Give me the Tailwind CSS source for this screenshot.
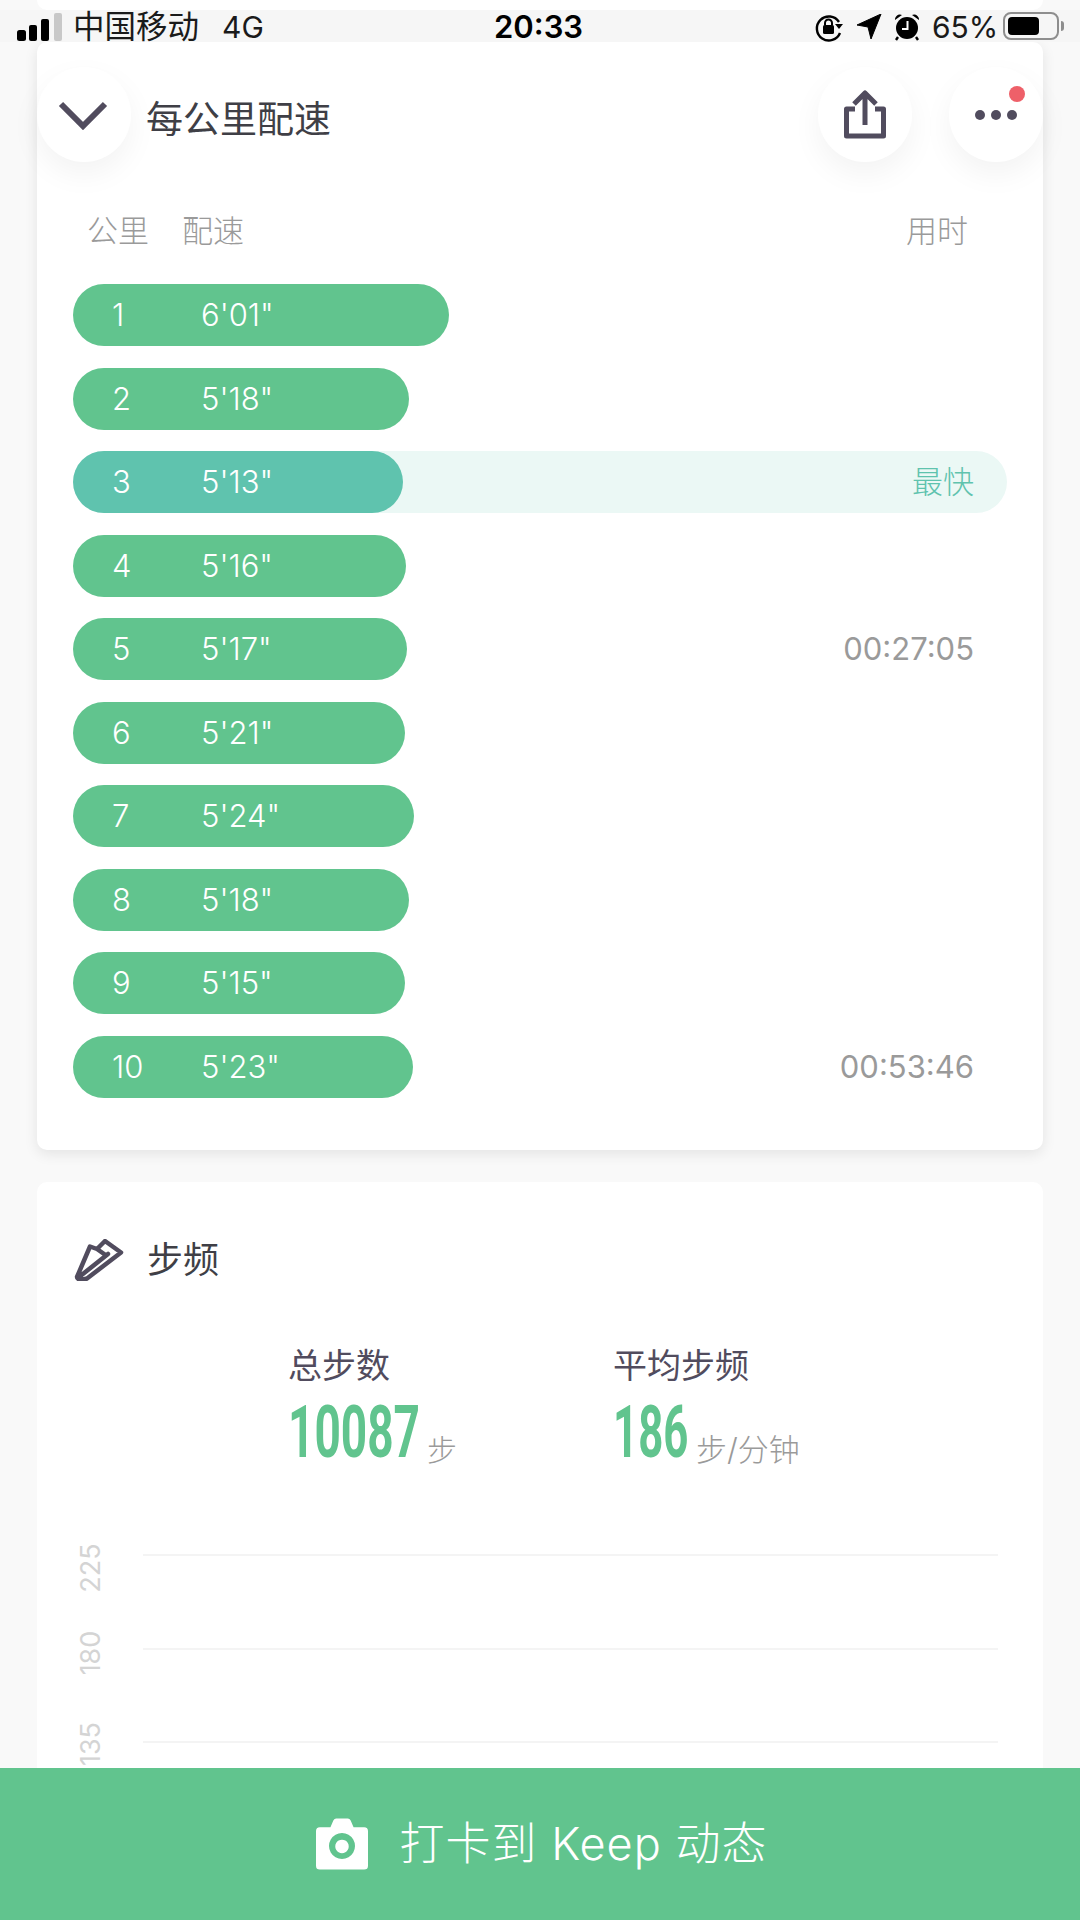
<!DOCTYPE html>
<html lang="zh-CN">
<head>
<meta charset="UTF-8">
<title>每公里配速</title>
<script src="https://cdn.jsdelivr.net/npm/@tailwindcss/browser@4"></script>
</head>
<body class="bg-[#f9f9f9]">
<div class="relative w-[1080px] h-[1920px] overflow-hidden font-['Inter','Noto_Sans_CJK_SC',sans-serif]">

  <!-- Status bar -->
  <div class="absolute top-[10px] left-0 right-0 h-[32px] z-10 bg-[#f6f6f6]">
    <div class="relative h-full">
      <svg class="absolute left-[17px] top-[3px]" width="46" height="29" viewBox="0 0 46 29">
        <rect x="0" y="17" width="9" height="11" rx="2.5" fill="#000"/>
        <rect x="12" y="12" width="8" height="16" rx="2" fill="#000"/>
        <rect x="24" y="6" width="8" height="22" rx="2" fill="#000"/>
        <rect x="37" y="0" width="8" height="28" rx="2" fill="#c8c8c8"/>
      </svg>
      <span class="absolute left-[73px] top-[-2px] text-[31.5px] leading-[38px] text-[#1a1a1a] whitespace-nowrap">中国移动</span>
      <span class="absolute left-[222px] top-[-2px] text-[30px] leading-[38px] text-[#1a1a1a]">4G</span>
      <span class="absolute left-[494px] top-[-2px] text-[31px] leading-[38px] font-semibold text-black">20:33</span>
      <svg class="absolute left-[814px] top-[3px]" width="30" height="30" viewBox="0 0 30 30">
        <path d="M25 9A12 12 0 1 0 26 20" fill="none" stroke="#000" stroke-width="2.4"/>
        <path d="M21 11h8l-4 5z" fill="#000"/>
        <rect x="9" y="12" width="11" height="9" rx="1.5" fill="#000"/>
        <path d="M11 12V10a3.5 3.5 0 0 1 7 0v2" fill="none" stroke="#000" stroke-width="2"/>
      </svg>
      <svg class="absolute left-[857px] top-[4px]" width="25" height="26" viewBox="0 0 25 26">
        <path d="M24 0L14 25 11 13 0 11z" fill="#000" stroke="#000" stroke-linejoin="round"/>
      </svg>
      <svg class="absolute left-[894px] top-[3px]" width="26" height="28" viewBox="0 0 26 28">
        <circle cx="13" cy="15" r="11" fill="#000"/>
        <path d="M1 7a5 5 0 0 1 7-5zM25 7a5 5 0 0 0-7-5z" fill="#000"/>
        <path d="M4 24l-2 3M22 24l2 3" stroke="#000" stroke-width="2.4"/>
        <path d="M13.500 8v8H8" fill="none" stroke="#fff" stroke-width="2"/>
      </svg>
      <span class="absolute left-[932px] top-[-2px] text-[30px] leading-[38px] text-[#1a1a1a]">65%</span>
      <div class="absolute left-[1003px] top-[2px] w-[56px] h-[28px] rounded-[8px] border-2 border-[#8e8e8e] p-[3px]">
        <div class="w-[31px] h-full rounded-[4px] bg-black"></div>
      </div>
      <div class="absolute left-[1061px] top-[11px] w-[3px] h-[10px] rounded-r-full bg-[#8e8e8e]"></div>
    </div>
  </div>

  <div class="mx-[37px] h-[10px] rounded-b-[10px] bg-white"></div>

  <!-- Pace card -->
  <section class="mt-[32px] h-[1108px] rounded-[10px] mx-[37px] bg-white shadow-[0_4px_14px_rgba(0,0,0,0.09)] pt-[25px]">
    <header class="flex items-center h-[95px]">
      <div class="flex items-center justify-center w-[94px] h-[95px] rounded-full bg-white shadow-[0_12px_30px_rgba(0,0,0,0.05)]">
        <svg class="mr-[3px]" width="50" height="30" viewBox="0 0 50 30"><path d="M3 4l22 22L47 4" fill="none" stroke="#514c5e" stroke-width="6"/></svg>
      </div>
      <h1 class="ml-[15px] pt-[10px] text-[37px] font-normal text-[#3f3f46]">每公里配速</h1>
      <div class="ml-auto flex items-center gap-[37px]">
        <div class="flex items-center justify-center w-[94px] h-[95px] rounded-full bg-white shadow-[0_12px_30px_rgba(0,0,0,0.05)]">
          <svg width="44" height="50" viewBox="0 0 44 50"><path d="M12 19H3.500v27h37V19H32M22 35V5M11 14L22 3l11 11" fill="none" stroke="#514c5e" stroke-width="5" stroke-linejoin="round"/></svg>
        </div>
        <div class="relative flex items-center justify-center gap-[6px] w-[94px] h-[95px] rounded-full bg-white shadow-[0_12px_30px_rgba(0,0,0,0.05)]">
          <i class="block w-[10px] h-[10px] rounded-full bg-[#514c5e]"></i>
          <i class="block w-[10px] h-[10px] rounded-full bg-[#514c5e]"></i>
          <i class="block w-[10px] h-[10px] rounded-full bg-[#514c5e]"></i>
          <i class="absolute top-[19px] right-[18px] block w-[16px] h-[16px] rounded-full bg-[#ee6069]"></i>
        </div>
      </div>
    </header>

    <div class="flex items-center h-[40px] mt-[49px] pl-[50px] pr-[75px] text-[31px] text-[#9a9a9a] font-light">
      <span>公里</span>
      <span class="ml-[33px]">配速</span>
      <span class="ml-auto">用时</span>
    </div>

    <div class="mt-[33px] mx-[36px] flex flex-col gap-[21.5px] text-[31px] leading-[64px] text-white font-light">
      <div class="flex items-center justify-between h-[62px] rounded-full">
        <div class="flex items-center h-full rounded-full bg-[#61c48e]" style="width:376px"><span class="w-[128px] pl-[39px]">1</span><span>6'01"</span></div>
      </div>
      <div class="flex items-center justify-between h-[62px] rounded-full">
        <div class="flex items-center h-full rounded-full bg-[#61c48e]" style="width:336px"><span class="w-[128px] pl-[39px]">2</span><span>5'18"</span></div>
      </div>
      <div class="flex items-center justify-between h-[62px] rounded-full bg-[#ebf8f5] pr-[33px]">
        <div class="flex items-center h-full rounded-full bg-[#5fc3ae]" style="width:330px"><span class="w-[128px] pl-[39px]">3</span><span>5'13"</span></div>
        <span class="text-[#5fc3ae]">最快</span>
      </div>
      <div class="flex items-center justify-between h-[62px] rounded-full">
        <div class="flex items-center h-full rounded-full bg-[#61c48e]" style="width:333px"><span class="w-[128px] pl-[39px]">4</span><span>5'16"</span></div>
      </div>
      <div class="flex items-center justify-between h-[62px] rounded-full pr-[33px]">
        <div class="flex items-center h-full rounded-full bg-[#61c48e]" style="width:334px"><span class="w-[128px] pl-[39px]">5</span><span>5'17"</span></div>
        <span class="text-[#9a9a9a] font-normal">00:27:05</span>
      </div>
      <div class="flex items-center justify-between h-[62px] rounded-full">
        <div class="flex items-center h-full rounded-full bg-[#61c48e]" style="width:332px"><span class="w-[128px] pl-[39px]">6</span><span>5'21"</span></div>
      </div>
      <div class="flex items-center justify-between h-[62px] rounded-full">
        <div class="flex items-center h-full rounded-full bg-[#61c48e]" style="width:341px"><span class="w-[128px] pl-[39px]">7</span><span>5'24"</span></div>
      </div>
      <div class="flex items-center justify-between h-[62px] rounded-full">
        <div class="flex items-center h-full rounded-full bg-[#61c48e]" style="width:336px"><span class="w-[128px] pl-[39px]">8</span><span>5'18"</span></div>
      </div>
      <div class="flex items-center justify-between h-[62px] rounded-full">
        <div class="flex items-center h-full rounded-full bg-[#61c48e]" style="width:332px"><span class="w-[128px] pl-[39px]">9</span><span>5'15"</span></div>
      </div>
      <div class="flex items-center justify-between h-[62px] rounded-full pr-[33px]">
        <div class="flex items-center h-full rounded-full bg-[#61c48e]" style="width:340px"><span class="w-[128px] pl-[39px]">10</span><span>5'23"</span></div>
        <span class="text-[#9a9a9a] font-normal">00:53:46</span>
      </div>
    </div>
  </section>

  <!-- Cadence card -->
  <section class="mt-[32px] mx-[37px] h-[800px] rounded-[10px] bg-white pt-[57px]">
    <div class="flex items-center h-[42px] pl-[37px]">
      <svg width="50" height="42" viewBox="0 0 50 42">
        <path d="M3 38L16 7.500l7 2.500 8-8 16 11.500L13 39.500C8 41 3 41 3 38zM7 36.500L34 15M23 10l8.500 6" fill="none" stroke="#514c5e" stroke-width="4.500" stroke-linejoin="round" stroke-linecap="round"/>
      </svg>
      <h2 class="ml-[23px] text-[36px] font-normal text-[#3f3f46]">步频</h2>
    </div>

    <div class="flex mt-[63px] pl-[251px]">
      <div class="w-[325px]">
        <div class="text-[34px] leading-[44px] text-[#514c5e]">总步数</div>
        <div class="flex items-end h-[77px]">
          <span class="block w-[129px] origin-left scale-x-[0.63] whitespace-nowrap font-['Roboto',sans-serif] font-bold text-[73px] leading-[66px] text-[#61c48e]">10087</span>
          <span class="ml-[10px] mb-[-4px] text-[30px] leading-[38px] text-[#9a9a9a] font-light">步</span>
        </div>
      </div>
      <div>
        <div class="text-[34px] leading-[44px] text-[#514c5e]">平均步频</div>
        <div class="flex items-end h-[77px]">
          <span class="block w-[72px] origin-left scale-x-[0.6] whitespace-nowrap font-['Roboto',sans-serif] font-bold text-[73px] leading-[66px] text-[#61c48e]">186</span>
          <span class="ml-[11px] mb-[-4px] text-[31px] leading-[38px] text-[#9a9a9a] font-light">步/分钟</span>
        </div>
      </div>
    </div>

    <div class="mt-[89px] text-[27px] text-[#d4d4d4]">
      <div class="flex h-[93.5px]">
        <div class="flex justify-center w-[34px] h-0 ml-[37px] mt-[-2px]"><span class="block -rotate-90 translate-y-[-1px] leading-[34px] h-[34px]">225</span></div>
        <div class="flex-1 ml-[35px] mr-[45px] border-t-2 border-[#f4f4f4]"></div>
      </div>
      <div class="flex h-[93.5px]">
        <div class="flex justify-center w-[34px] h-0 ml-[37px] mt-[-12px]"><span class="block -rotate-90 leading-[34px] h-[34px]">180</span></div>
        <div class="flex-1 ml-[35px] mr-[45px] border-t-2 border-[#f4f4f4]"></div>
      </div>
      <div class="flex h-[93.5px]">
        <div class="flex justify-center w-[34px] h-0 ml-[37px] mt-[-14px]"><span class="block -rotate-90 leading-[34px] h-[34px]">135</span></div>
        <div class="flex-1 ml-[35px] mr-[45px] border-t-2 border-[#f4f4f4]"></div>
      </div>
    </div>
  </section>

  <!-- Bottom action -->
  <div class="absolute left-0 right-0 bottom-0 h-[152px] bg-[#61c48e] flex items-center justify-center gap-[32px] text-white pl-[3px]">
    <svg width="52" height="52" viewBox="0 0 54 53">
      <path fill-rule="evenodd" fill="#fff" d="M4 9h11l3-7q1-2 3-2h12q2 0 3 2l3 7h11q4 0 4 4v36q0 4-4 4H4q-4 0-4-4V13q0-4 4-4zM27 15a13.500 13.500 0 1 0 .01 0zM27 22a7 7 0 1 1-.01 0z"/>
    </svg>
    <span class="text-[45px] tracking-[1px] font-light whitespace-pre">打卡到 Keep 动态</span>
  </div>
</div>
</body>
</html>
